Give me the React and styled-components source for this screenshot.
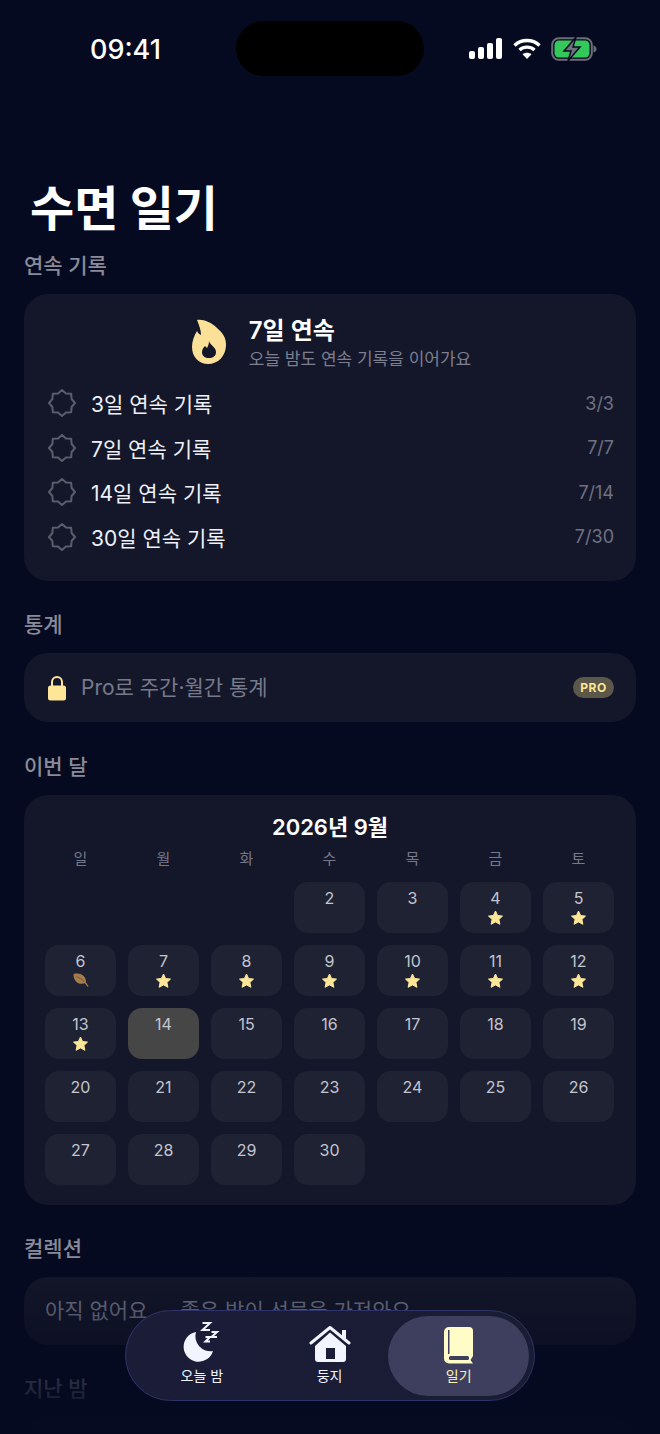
import React from "react";
import styled, { createGlobalStyle } from "styled-components";

const GlobalStyle = createGlobalStyle`
  html, body {
    margin: 0;
    padding: 0;
    background: #060a20;
  }
  * {
    box-sizing: border-box;
  }
`;

const milestones = [
  { label: "3일 연속 기록", progress: "3/3" },
  { label: "7일 연속 기록", progress: "7/7" },
  { label: "14일 연속 기록", progress: "7/14" },
  { label: "30일 연속 기록", progress: "7/30" },
];

const weekdays = ["일", "월", "화", "수", "목", "금", "토"];
const starDays = [4, 5, 7, 8, 9, 10, 11, 12, 13];

// ! 8-pointed seal outline for the streak badges
const sealPoints = Array.from({ length: 16 }, (_, i) => {
  const r = i % 2 === 0 ? 13 : 10.4;
  const a = (Math.PI / 8) * i - Math.PI / 2;
  return `${(14 + r * Math.cos(a)).toFixed(2)},${(14 + r * Math.sin(a)).toFixed(2)}`;
}).join(" ");

function StatusIcons() {
  return (
    <StatusRight>
      <svg width="34" height="22" viewBox="0 0 34 22" fill="#fff">
        <rect x="0" y="13" width="6" height="8" rx="2" />
        <rect x="9" y="9" width="6" height="12" rx="2" />
        <rect x="18" y="5" width="6" height="16" rx="2" />
        <rect x="27" y="0" width="6" height="21" rx="2" />
      </svg>
      <svg width="28" height="22" viewBox="0 0 28 22" fill="none" stroke="#fff" strokeWidth="3.4">
        <path d="M1.5 7.5C8.5 .9 19.500 .9 26.500 7.500" />
        <path d="M6.500 12C10.800 8.200 17.200 8.200 21.500 12" />
        <path d="M14 21l-4.500-4.700c2.500-2 6.500-2 9 0z" fill="#fff" stroke="none" />
      </svg>
      <svg width="46" height="24" viewBox="0 0 46 24">
        <rect x="1.200" y="1.200" width="39.600" height="21.600" rx="6.500" fill="none" stroke="#6b6d78" strokeWidth="2" />
        <rect x="3.500" y="3.500" width="35" height="17" rx="4.500" fill="#34c759" />
        <path d="M42.500 8.500c2 .5 3 2 3 3.500s-1 3-3 3.500z" fill="#6b6d78" />
        <path
          d="M25 0L13 14h7l-3 10 12-14h-7z"
          fill="#6e707b"
          stroke="#060a20"
          strokeWidth="1.500"
        />
      </svg>
    </StatusRight>
  );
}

function Flame() {
  return (
    <FlameIcon width="40" height="50" viewBox="0 0 40 50">
      <path
        d="M8 3C14 2 22 5 28 11C34 16 37 21 37 28C37 39 29 47 19 47C10 47 3 40 3 30C3 24 5 19 8 14C9 16 10 17 12 18C12 13 10 8 8 3Z"
        fill="#fbe197"
      />
      <path
        d="M20 24C21 28 27 30 27 35C27 39 24 41 20 41C16 41 13 39 13 35C13 32 15 30 16 29C17 30 18 31 18 31C19 29 20 27 20 24Z"
        fill="#141729"
      />
    </FlameIcon>
  );
}

function Seal() {
  return (
    <SealIcon width="28" height="28" viewBox="0 0 28 28">
      <polygon
        points={sealPoints}
        fill="none"
        stroke="#5a5d6c"
        strokeWidth="2"
        strokeLinejoin="round"
      />
    </SealIcon>
  );
}

function Lock() {
  return (
    <svg width="18" height="26" viewBox="0 0 18 26">
      <path d="M4 12V7a5 5 0 0 1 10 0v5" fill="none" stroke="#fde698" strokeWidth="2" />
      <rect x="0" y="10.500" width="18" height="15" rx="2.500" fill="#fde698" />
    </svg>
  );
}

function Star() {
  return (
    <svg width="17" height="16" viewBox="0 0 16 16">
      <path
        d="M8 1l2.100 4.500 4.900.6-3.600 3.300 1 4.900L8 11.900l-4.400 2.400 1-4.900L1 6.100l4.900-.6z"
        fill="#fde698"
        stroke="#fde698"
        strokeWidth="1"
        strokeLinejoin="round"
      />
    </svg>
  );
}

function Leaf() {
  return (
    <svg width="16" height="14" viewBox="0 0 16 14">
      <path d="M0.500 1C7 -.5 13 2 13 9.500C8 12.500 0.500 10.500 0.500 1Z" fill="#a67c4a" />
      <path d="M11 8.500C12.500 10 14 11.500 15 13.500" fill="none" stroke="#a67c4a" strokeWidth="1.200" />
      <path d="M3.500 3.800C6.500 4.800 9 6.300 11 8.500" fill="none" stroke="#6c5236" strokeWidth=".8" />
    </svg>
  );
}

function MoonIcon() {
  return (
    <svg width="38" height="44" viewBox="0 0 38 44">
      <path d="M13 12A15 15 0 1 0 30 31A15 15 0 0 1 13 12Z" fill="#f2f4ff" />
      <g fill="none" stroke="#f2f4ff" strokeWidth="2">
        <path d="M19.500 3H27L19.500 10H27" />
        <path d="M28.500 12H34L28.500 17H34" />
        <path d="M22.500 17H27L22.500 21.500H27" />
      </g>
    </svg>
  );
}

function HomeIcon() {
  return (
    <svg width="42" height="40" viewBox="0 0 42 40">
      <path d="M33 6h4v9l-4-3z" fill="#f2f4ff" />
      <path
        d="M2 19L21 3.500L40 19"
        fill="none"
        stroke="#f2f4ff"
        strokeWidth="3"
        strokeLinecap="round"
        strokeLinejoin="round"
      />
      <path d="M21 8.500L37 22V35a3 3 0 0 1-3 3H9a3 3 0 0 1-3-3V22Z" fill="#f2f4ff" />
      <rect x="17" y="24" width="9" height="11" fill="#1b1d38" />
    </svg>
  );
}

function BookIcon() {
  return (
    <svg width="30" height="37" viewBox="0 0 30 37">
      <path
        d="M5 0H25a4 4 0 0 1 4 4V29L26.500 33L29 36.500H5a5 5 0 0 1-5-5V5a5 5 0 0 1 5-5Z"
        fill="#fffcc8"
      />
      <rect x="4" y="3" width="1.500" height="24" fill="#3e3f5f" />
      <rect x="5" y="29" width="20" height="4" rx="1.500" fill="#3e3f5f" />
    </svg>
  );
}

function Calendar() {
  const days = Array.from({ length: 29 }, (_, i) => i + 2);

  return (
    <CalendarCard>
      <MonthTitle>2026년 9월</MonthTitle>
      <WeekRow>
        {weekdays.map((w) => (
          <Weekday key={w}>{w}</Weekday>
        ))}
      </WeekRow>
      <DayGrid>
        <EmptyCell />
        <EmptyCell />
        <EmptyCell />
        {days.map((d) => (
          <DayCell key={d} $today={d === 14}>
            <span>{d}</span>
            {starDays.includes(d) && <Star />}
            {d === 6 && <Leaf />}
          </DayCell>
        ))}
      </DayGrid>
    </CalendarCard>
  );
}

export default function App() {
  return (
    <>
      <GlobalStyle />
      <Page>
        <StatusBar>
          <Clock>09:41</Clock>
          <Island />
          <StatusIcons />
        </StatusBar>

        <Title>수면 일기</Title>

        <SectionLabel>연속 기록</SectionLabel>
        <StreakCard>
          <StreakHead>
            <Flame />
            <div>
              <StreakTitle>7일 연속</StreakTitle>
              <StreakSub>오늘 밤도 연속 기록을 이어가요</StreakSub>
            </div>
          </StreakHead>
          {milestones.map((m) => (
            <Milestone key={m.label}>
              <Seal />
              <MilestoneName>{m.label}</MilestoneName>
              <MilestoneCount>{m.progress}</MilestoneCount>
            </Milestone>
          ))}
        </StreakCard>

        <SectionLabel>통계</SectionLabel>
        <ProCard>
          <Lock />
          <ProText>Pro로 주간·월간 통계</ProText>
          <ProBadge>PRO</ProBadge>
        </ProCard>

        <SectionLabel>이번 달</SectionLabel>
        <Calendar />

        <SectionLabel>컬렉션</SectionLabel>
        <EmptyCard>
          <span>아직 없어요</span>
          <span>좋은 밤이 선물을 가져와요</span>
        </EmptyCard>

        <SectionLabel>지난 밤</SectionLabel>
        <EmptyCard />

        <BottomFade />
        <TabBar>
          <Tab>
            <TabIcon>
              <MoonIcon />
            </TabIcon>
            오늘 밤
          </Tab>
          <Tab>
            <TabIcon>
              <HomeIcon />
            </TabIcon>
            둥지
          </Tab>
          <Tab $active>
            <TabIcon>
              <BookIcon />
            </TabIcon>
            일기
          </Tab>
        </TabBar>
      </Page>
    </>
  );
}

const Page = styled.div`
  position: relative;
  width: 660px;
  height: 1434px;
  overflow: hidden;
  padding: 21px 24px 0;
  background: #060a20;
  font-family: Inter, "Noto Sans CJK KR", sans-serif;
`;

const StatusBar = styled.div`
  display: grid;
  grid-template-columns: 1fr 188px 1fr;
  align-items: center;
  height: 55px;
`;

const Clock = styled.div`
  padding: 1px 0 0 66px;
  font-size: 27px;
  font-weight: 500;
  color: #fff;
`;

const Island = styled.div`
  height: 55px;
  border-radius: 28px;
  background: #000;
`;

const StatusRight = styled.div`
  display: flex;
  align-items: center;
  justify-content: flex-end;
  gap: 10px;
  padding-right: 39px;
`;

const Title = styled.h1`
  margin: 99px 0 7px 6px;
  font-size: 48px;
  line-height: 68px;
  font-weight: 700;
  color: #fff;
`;

const SectionLabel = styled.h2`
  margin: 0 0 13px;
  padding-top: 1px;
  font-size: 21px;
  line-height: 30px;
  font-weight: 500;
  color: #8a8b98;
`;

const Card = styled.div`
  margin-bottom: 28px;
  border-radius: 24px;
  background: #141729;
`;

const StreakCard = styled(Card)`
  height: 287px;
  padding: 20px 22px 0 22px;
`;

const StreakHead = styled.div`
  display: flex;
  align-items: center;
  justify-content: center;
  gap: 20px;
  margin-bottom: 11px;
`;

const FlameIcon = styled.svg`
  flex: none;
`;

const StreakTitle = styled.div`
  font-size: 24px;
  line-height: 34px;
  font-weight: 600;
  color: #fff;
`;

const StreakSub = styled.div`
  font-size: 17px;
  line-height: 22px;
  color: #7d7f90;
`;

const SealIcon = styled.svg`
  flex: none;
  margin-left: 2px;
`;

const Milestone = styled.div`
  display: flex;
  align-items: center;
  height: 44.5px;
  gap: 15px;
`;

const MilestoneName = styled.div`
  flex: 1;
  font-size: 21px;
  color: #eef0f8;
`;

const MilestoneCount = styled.div`
  font-size: 18px;
  color: #6f7183;
`;

const ProCard = styled(Card)`
  display: flex;
  align-items: center;
  gap: 15px;
  height: 69px;
  margin-bottom: 29px;
  padding: 0 22px 0 24px;
`;

const ProText = styled.div`
  flex: 1;
  padding-bottom: 3px;
  font-size: 21px;
  color: #777a8c;
`;

const ProBadge = styled.div`
  display: flex;
  align-items: center;
  justify-content: center;
  width: 41px;
  height: 21px;
  border-radius: 11px;
  background: #5b5749;
  font-size: 12px;
  font-weight: 700;
  letter-spacing: 0.5px;
  color: #fde698;
`;

const CalendarCard = styled(Card)`
  height: 410px;
  padding: 16px 21px 0;
`;

const MonthTitle = styled.div`
  font-size: 22px;
  line-height: 32px;
  font-weight: 600;
  text-align: center;
  color: #fff;
`;

const WeekRow = styled.div`
  display: grid;
  grid-template-columns: repeat(7, 71px);
  column-gap: 12px;
  margin: 4px 0 11px;
`;

const DayGrid = styled.div`
  display: grid;
  grid-template-columns: repeat(7, 71px);
  grid-auto-rows: 51px;
  gap: 12px;
`;

const Weekday = styled.div`
  font-size: 15px;
  line-height: 24px;
  text-align: center;
  color: #75778a;
`;

const EmptyCell = styled.div``;

const DayCell = styled.div`
  display: flex;
  flex-direction: column;
  align-items: center;
  padding-top: 6px;
  border-radius: 14px;
  background: ${(p) => (p.$today ? "#474646" : "#1f2233")};
  font-size: 16px;
  line-height: 20px;
  color: #c3c5d0;

  svg {
    margin-top: 2px;
  }
`;

const EmptyCard = styled(Card)`
  display: flex;
  gap: 33px;
  height: 68px;
  padding: 17px 21px 0;
  font-size: 21px;
  color: #777a8c;
`;

const BottomFade = styled.div`
  position: absolute;
  left: 0;
  right: 0;
  bottom: 0;
  height: 170px;
  background: linear-gradient(to bottom, rgba(6, 10, 32, 0), rgba(6, 10, 32, 0.8) 75%, #060a20);
`;

const TabBar = styled.nav`
  position: absolute;
  left: 125px;
  top: 1310px;
  display: flex;
  width: 410px;
  height: 91px;
  padding: 5px 5px 4px 12px;
  border: 1.5px solid #2e3368;
  border-radius: 46px;
  background: linear-gradient(to right, #1b1d38, #1a1c34);
`;

const Tab = styled.div`
  display: flex;
  flex-direction: column;
  align-items: center;
  width: ${(p) => (p.$active ? "141px" : "128px")};
  margin-left: ${(p) => (p.$active ? "-5px" : "0")};
  border-radius: 40px;
  background: ${(p) => (p.$active ? "#3e3f5f" : "transparent")};
  font-size: 14px;
  line-height: 20px;
  font-weight: 400;
  color: ${(p) => (p.$active ? "#fdf3b0" : "#f2f4ff")};
`;

const TabIcon = styled.div`
  display: flex;
  align-items: flex-end;
  justify-content: center;
  height: 48px;
  margin-bottom: 2px;
`;
